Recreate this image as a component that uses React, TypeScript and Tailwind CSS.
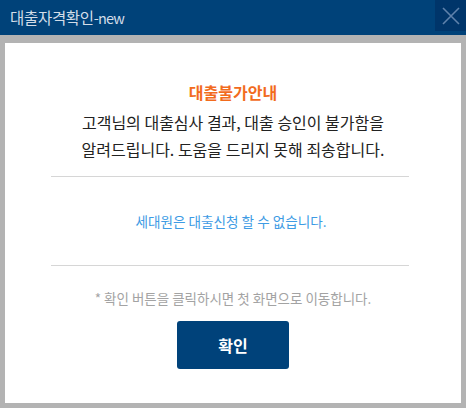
import React from "react";

const font = { fontFamily: '"Noto Sans CJK KR", "Noto Sans", sans-serif' };

export default function App() {
  return (
    <div className="w-[466px] h-[408px] flex flex-col bg-[#b3b3b3]" style={font}>
      <div className="h-[35px] flex items-start justify-between bg-[#004279]">
        <h1 className="pl-[10px] pt-[6px] text-[15.5px] leading-[22px] text-[#d3dde8] tracking-[-0.3px]">
          대출자격확인<span className="text-[14.5px] tracking-[-0.8px]">-new</span>
        </h1>
        <button className="w-[31px] h-[31px] flex items-center justify-center bg-[#00356a]">
          <svg width="18" height="18" viewBox="0 0 18 18" fill="none" stroke="#5f82ac" strokeWidth="1.6">
            <path d="M1 1 L17 17 M17 1 L1 17" />
          </svg>
        </button>
      </div>

      <div className="flex-1 pt-[8px] px-[5px] pb-[5px]">
        <div className="h-full bg-white flex flex-col items-center pt-[38px]">
          <h2 className="text-[16px] leading-[22px] font-bold text-[#f26b1d]">대출불가안내</h2>
          <p className="mt-[6px] text-[16px] leading-[27px] text-[#222] text-center">
            고객님의 대출심사 결과, 대출 승인이 불가함을
            <br />
            알려드립니다. 도움을 드리지 못해 죄송합니다.
          </p>
          <div className="mt-[13px] w-[358px] h-px bg-[#d6d6d6] -translate-x-[3px]" />
          <p className="mt-[34px] text-[13.6px] leading-[20px] text-[#3d9be4] -translate-x-[2px]">세대원은 대출신청 할 수 없습니다.</p>
          <div className="mt-[34px] w-[358px] h-px bg-[#d6d6d6] -translate-x-[3px]" />
          <p className="mt-[22px] text-[13.5px] leading-[20px] text-[#a3a3a3]">
            * 확인 버튼을 클릭하시면 첫 화면으로 이동합니다.
          </p>
          <button className="mt-[13px] w-[112px] h-[48px] rounded-[3px] bg-[#00427a] text-white text-[16px] font-bold">
            확인
          </button>
        </div>
      </div>
    </div>
  );
}
